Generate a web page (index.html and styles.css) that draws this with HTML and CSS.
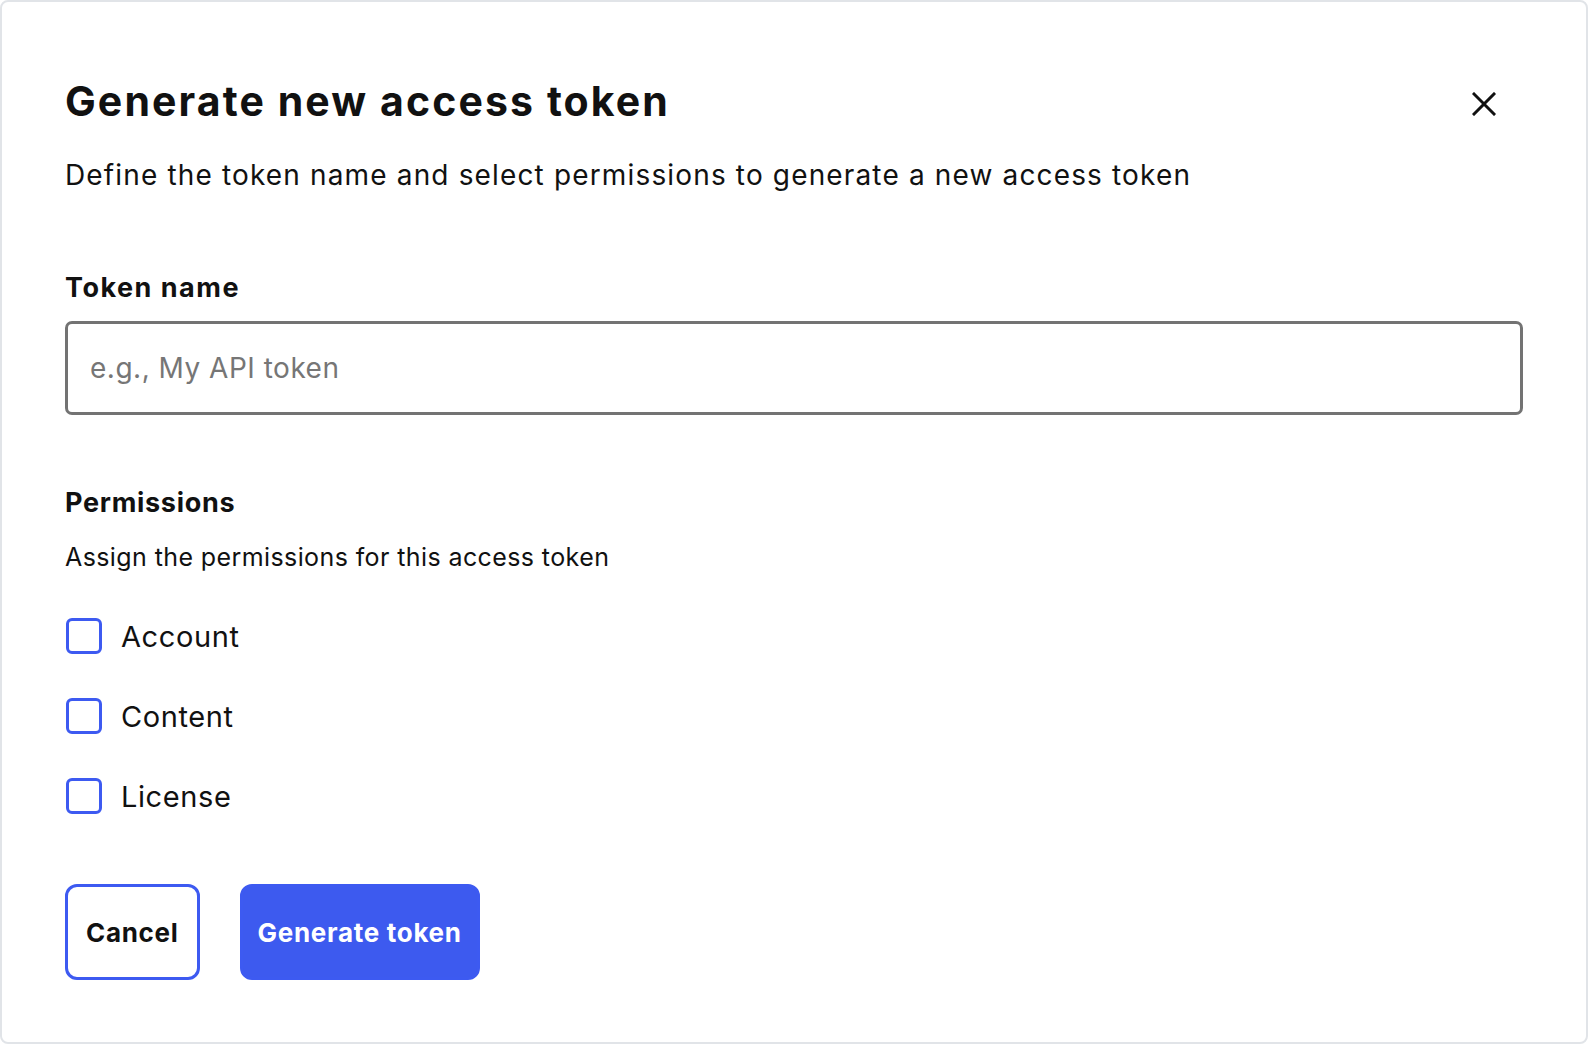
FILE: index.html
```html
<!DOCTYPE html>
<html lang="en">
<head>
    <meta charset="UTF-8">
    <meta name="viewport" content="width=device-width, initial-scale=1.0">
    <title>Generate new access token</title>
    <link rel="stylesheet" href="styles.css">
</head>
<body>

<div class="dialog">
    <div class="dialog-header">
        <h1>Generate new access token</h1>
        <button class="close-btn" aria-label="Close">
            <svg width="24" height="24" viewBox="0 0 24 24" fill="none" stroke="#111" stroke-width="3" stroke-linecap="square">
                <path d="M2 2 L22 22 M22 2 L2 22"/>
            </svg>
        </button>
    </div>
    <p class="subtitle">Define the token name and select permissions to generate a new access token</p>

    <label class="field-label" for="token-name">Token name</label>
    <input type="text" id="token-name" class="text-input" placeholder="e.g., My API token" />

    <h2 class="section-title">Permissions</h2>
    <p class="section-desc">Assign the permissions for this access token</p>

    <div class="checkbox-list">
        <label class="checkbox-row"><span class="box"></span>Account</label>
        <label class="checkbox-row"><span class="box"></span>Content</label>
        <label class="checkbox-row"><span class="box"></span>License</label>
    </div>

    <div class="actions">
        <button class="btn btn-outline">Cancel</button>
        <button class="btn btn-primary">Generate token</button>
    </div>
</div>

</body>
</html>
```

FILE: styles.css
```css
* {
    box-sizing: border-box;
    margin: 0;
    padding: 0;
}

body {
    font-family: Inter, 'Noto Sans', sans-serif;
    background-color: #fff;
    color: #111;
    width: 1588px;
    height: 1044px;
    overflow: hidden;
}

.dialog {
    width: 1588px;
    height: 1044px;
    border: 2px solid #e1e4e8;
    border-radius: 8px;
    padding: 75px 63px 0 63px;
    display: flex;
    flex-direction: column;
}

.dialog-header {
    display: flex;
    justify-content: space-between;
    align-items: center;
}

h1 {
    font-size: 41px;
    line-height: 48px;
    font-weight: 700;
    letter-spacing: 2.1px;
}

.close-btn {
    background: none;
    border: none;
    width: 24px;
    height: 24px;
    margin-right: 27px;
    margin-top: 6px;
    cursor: pointer;
    display: flex;
}

.subtitle {
    margin-top: 32px;
    font-size: 28px;
    line-height: 36px;
    font-weight: 400;
    letter-spacing: 1.15px;
}

.field-label {
    margin-top: 78px;
    font-size: 27px;
    line-height: 34px;
    font-weight: 700;
    letter-spacing: 1.5px;
}

.text-input {
    margin-top: 16px;
    width: 100%;
    height: 94px;
    border: 3px solid #737373;
    border-radius: 7px;
    padding: 0 22px;
    font-family: inherit;
    font-size: 28px;
    letter-spacing: 0.5px;
    color: #111;
    outline: none;
}

.text-input::placeholder {
    color: #767676;
}

.section-title {
    margin-top: 71px;
    font-size: 27px;
    line-height: 34px;
    font-weight: 700;
    letter-spacing: 0.7px;
}

.section-desc {
    margin-top: 21px;
    font-size: 25px;
    line-height: 32px;
    letter-spacing: 0.4px;
}

.checkbox-list {
    margin-top: 43px;
    display: flex;
    flex-direction: column;
    gap: 40px;
}

.checkbox-row {
    display: flex;
    align-items: center;
    height: 40px;
    font-size: 29px;
    letter-spacing: 0.6px;
    gap: 19px;
    cursor: pointer;
}

.box {
    width: 36px;
    height: 36px;
    border: 3px solid #3d5af1;
    border-radius: 6px;
    margin-left: 1px;
}

.actions {
    margin-top: 68px;
    display: flex;
    gap: 40px;
}

.btn {
    height: 96px;
    border: 3px solid #3d5af1;
    border-radius: 12px;
    font-family: inherit;
    font-size: 26px;
    font-weight: 700;
    letter-spacing: 0.7px;
    cursor: pointer;
}

.btn-outline {
    padding: 0 18px;
    background-color: #fff;
    color: #111;
}

.btn-primary {
    padding: 0 15px;
    background-color: #3d5aef;
    color: #fff;
}
```
